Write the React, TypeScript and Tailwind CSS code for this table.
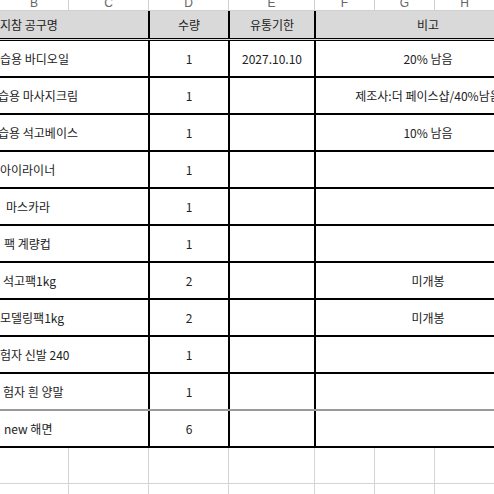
import React from "react";

type Row = {
  name: string;
  nameCls: string;
  qty: string;
  date: string;
  note: string;
  borderCls: string;
};

const rows: Row[] = [
  { name: "습용 바디오일", nameCls: "ml-0", qty: "1", date: "2027.10.10", note: "20% 남음", borderCls: "border-black" },
  { name: "습용 마사지크림", nameCls: "-ml-[2px]", qty: "1", date: "", note: "제조사:더 페이스샵/40%남음", borderCls: "border-black" },
  { name: "습용 석고베이스", nameCls: "-ml-[2px]", qty: "1", date: "", note: "10% 남음", borderCls: "border-black" },
  { name: "아이라이너", nameCls: "ml-0", qty: "1", date: "", note: "", borderCls: "border-black" },
  { name: "마스카라", nameCls: "ml-[6px]", qty: "1", date: "", note: "", borderCls: "border-black" },
  { name: "팩 계량컵", nameCls: "ml-[4px]", qty: "1", date: "", note: "", borderCls: "border-black" },
  { name: "석고팩1kg", nameCls: "ml-[3px]", qty: "2", date: "", note: "미개봉", borderCls: "border-black" },
  { name: "모델링팩1kg", nameCls: "ml-0", qty: "2", date: "", note: "미개봉", borderCls: "border-black" },
  { name: "험자 신발 240", nameCls: "ml-0", qty: "1", date: "", note: "", borderCls: "border-black" },
  { name: "험자 흰 양말", nameCls: "ml-[3px]", qty: "1", date: "", note: "", borderCls: "border-[#9a9a9a]" },
  { name: "new 해면", nameCls: "ml-[4px]", qty: "6", date: "", note: "", borderCls: "border-black" },
];

const letters = ["B", "C", "D", "E", "F", "G", "H"];

function GridRow() {
  return (
    <div className="grid grid-cols-[69px_80px_80px_86px_60px_60px_60px] h-[36px] border-b border-[#d4d4d4]">
      {letters.map((l) => (
        <div key={l} className="border-r border-[#d4d4d4]" />
      ))}
    </div>
  );
}

export default function App() {
  return (
    <div className="w-[494px] h-[494px] overflow-hidden bg-white relative font-['Noto_Sans_CJK_KR','Noto_Sans',sans-serif] text-[12px] text-[#222]">
      <div className="w-[538px]">
        {/* column letters */}
        <div className="grid grid-cols-[69px_80px_80px_86px_60px_60px_60px] h-[11px] border-b border-[#d0d0d0] overflow-hidden">
          {letters.map((l) => (
            <div
              key={l}
              className="border-r border-[#d0d0d0] text-center font-['Liberation_Sans',sans-serif] text-[12px] leading-none text-[#666] -mt-[3px]"
            >
              {l}
            </div>
          ))}
        </div>

        {/* header row */}
        <div className="grid grid-cols-[150px_80px_86px_224px] h-[30px] bg-[#d9d9d9] border-b-[3px] border-double border-black">
          <div className="border-r-2 border-black flex items-center overflow-hidden whitespace-nowrap">
            <span>지참 공구명</span>
          </div>
          <div className="border-r-2 border-black flex items-center justify-center">수량</div>
          <div className="border-r-2 border-black flex items-center justify-center">유통기한</div>
          <div className="flex items-center justify-center">비고</div>
        </div>

        {/* data rows */}
        {rows.map((r, i) => (
          <div
            key={i}
            className={`grid grid-cols-[150px_80px_86px_224px] h-[37px] border-b-2 ${r.borderCls}`}
          >
            <div className="border-r-2 border-black flex items-center overflow-hidden whitespace-nowrap">
              <span className={r.nameCls}>{r.name}</span>
            </div>
            <div className="border-r-2 border-black flex items-center justify-center">{r.qty}</div>
            <div className="border-r-2 border-black flex items-center justify-center">{r.date}</div>
            <div className="flex items-center justify-center whitespace-nowrap overflow-hidden">{r.note}</div>
          </div>
        ))}

        {/* empty rows */}
        <GridRow />
        <GridRow />
      </div>
    </div>
  );
}
